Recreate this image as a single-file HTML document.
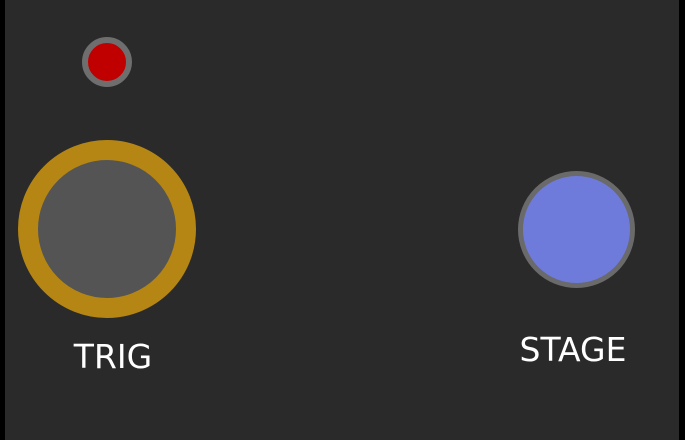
<!DOCTYPE html><html><head><style>
body{margin:0;width:685px;height:440px;background:#000;overflow:hidden;position:relative;font-family:"DejaVu Sans","Liberation Sans",sans-serif}
.p{position:absolute;left:5px;top:0;width:674px;height:440px;background:#2a2a2a}
.c{position:absolute;border-radius:50%;box-sizing:border-box}
.t{position:absolute;color:#fff;font-size:33px;line-height:1;text-align:center;width:200px}
</style></head><body><div class="p"></div>
<div class="c" style="left:82px;top:37px;width:50px;height:50px;background:#c00000;border:6px solid #6e6e6e"></div>
<div class="c" style="left:18px;top:140px;width:178px;height:178px;background:#545454;border:20px solid #b58614"></div>
<div class="c" style="left:518px;top:171px;width:117px;height:117px;background:#6f7bdb;border:5px solid #6a6a6a"></div>
<div class="t" style="left:13px;top:340px">TRIG</div>
<div class="t" style="left:473px;top:333px">STAGE</div>
</body></html>
